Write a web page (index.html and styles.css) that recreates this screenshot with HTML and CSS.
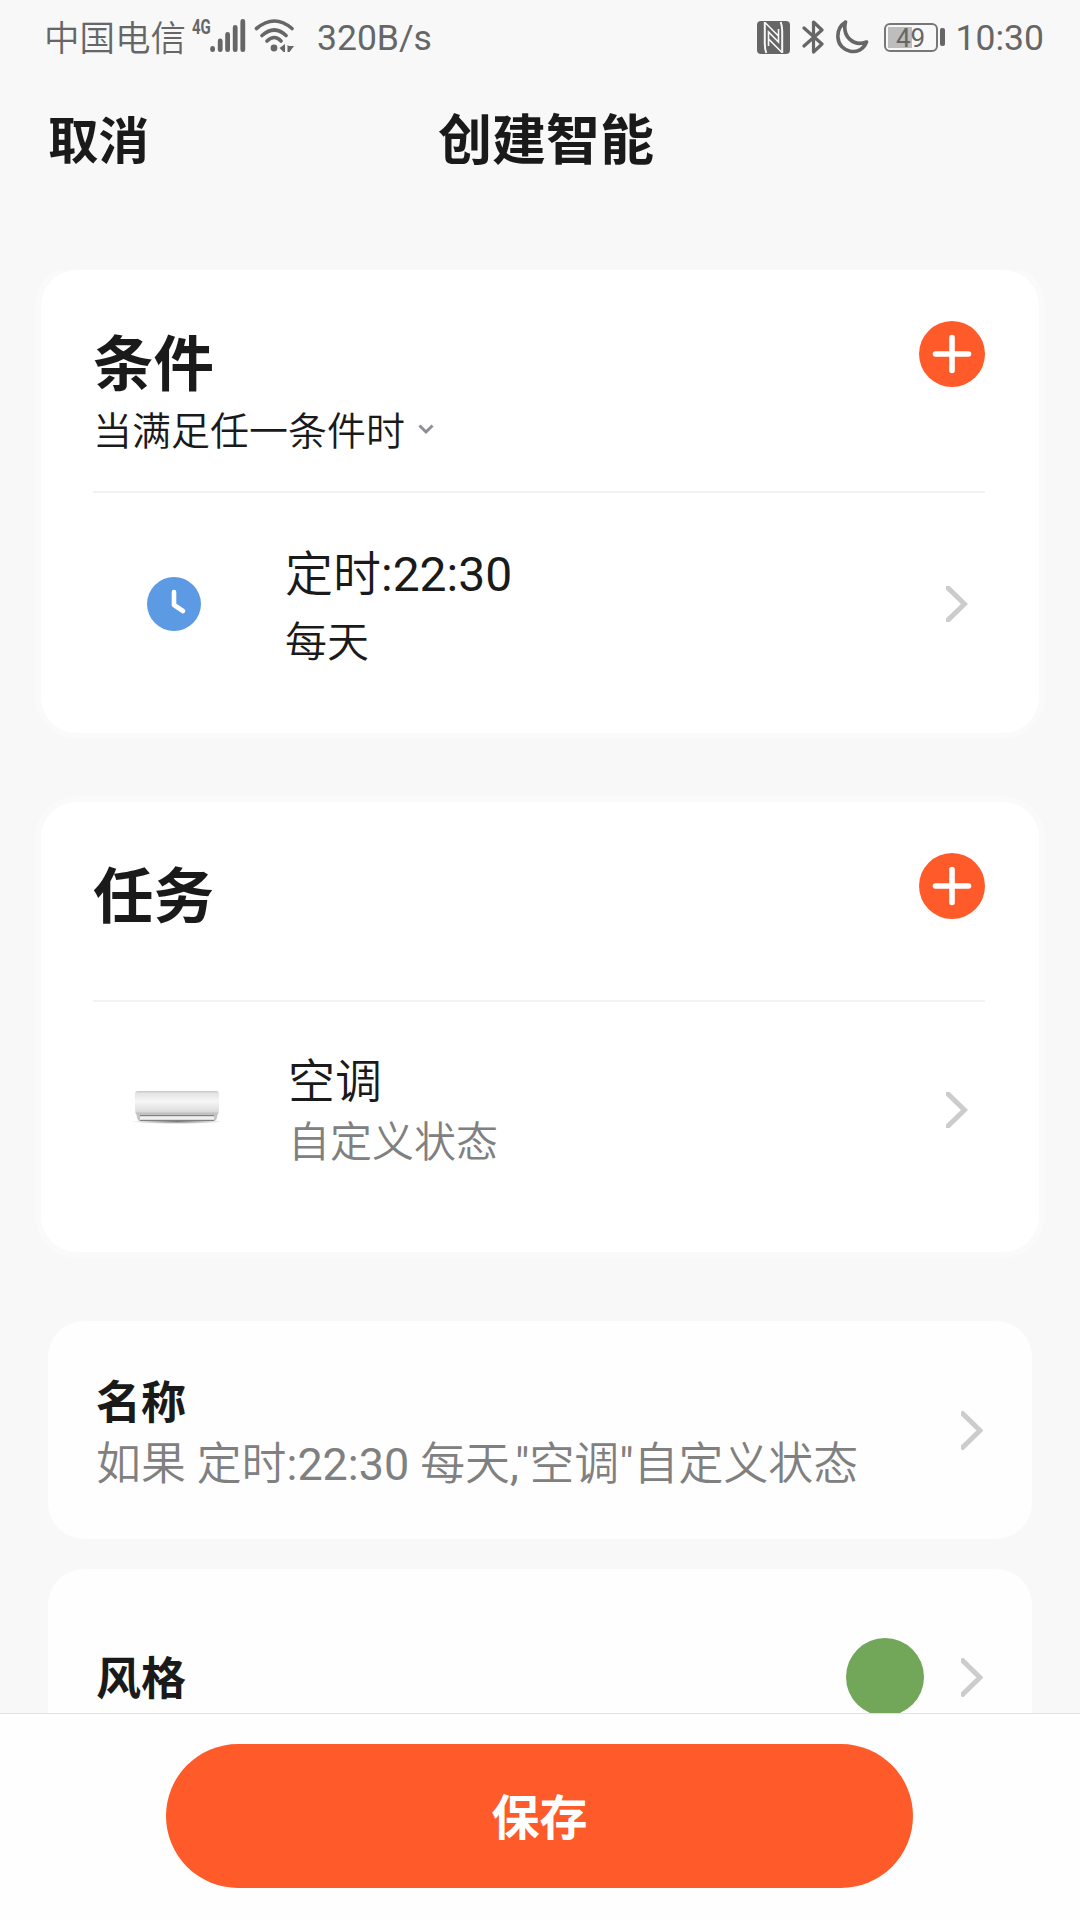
FILE: index.html
```
<!DOCTYPE html>
<html lang="zh-CN">

<head>
  <meta charset="UTF-8">
  <title>创建智能</title>
  <link rel="stylesheet" href="styles.css">
</head>

<body>
  <div class="status-bar">
    <span class="carrier">中国电信</span>
    <span class="network">4G</span>
    <svg class="signal" width="36" height="34" viewBox="0 0 36 34" stroke="#666" stroke-width="4.8" stroke-linecap="round">
      <path d="M2.6 29.5v1.2M10.2 22v8.7M17.6 15.5v15.2M25.2 8.5v22.2M32.8 2.5v28.2" />
    </svg>
    <svg class="wifi" width="42" height="34" viewBox="0 0 42 34" fill="none" stroke="#666" stroke-width="3.6" stroke-linecap="round">
      <path d="M2.5 9.5Q20.5 -5.5 38 9.5M8 16.5Q20.5 5.5 32 16.5M13 22Q20.5 15 27 22" />
      <circle cx="20" cy="29" r="3.4" fill="#666" stroke="none" />
      <path d="M31 25v8h-1.500l-4-4zM33.500 26l1.500 1h5l-4.500 6h-2z" fill="#666" stroke="none" />
    </svg>
    <span class="speed">320B/s</span>
    <div class="status-right">
      <svg class="nfc" width="33" height="33" viewBox="0 0 33 33">
        <rect width="33" height="33" rx="4" fill="#666" />
        <path d="M7.8 1v22q0 5 1.500 9M25.200 32V10q0-5-1.500-9" fill="none" stroke="#f8f8f8" stroke-width="2" />
        <path d="M8 1.500L21.500 15V8M25 31.500L11.500 18v7M11.500 18v-7l10 10v-6" fill="none" stroke="#f8f8f8" stroke-width="1.6" />
      </svg>
      <svg class="bluetooth" width="22" height="34" viewBox="0 0 22 34" fill="none" stroke="#666" stroke-width="3.2" stroke-linejoin="round" stroke-linecap="round">
        <path d="M2 8l18 16-8.5 8V2L20 10 2 26" />
      </svg>
      <svg class="moon" width="34" height="34" viewBox="0 0 34 34" fill="none" stroke="#666" stroke-width="3.6" stroke-linejoin="round">
        <path d="M10.5 2A17 17 0 0 0 3 18C4 32 25 38 31.5 22C18 27 7 16 10.5 2z" />
      </svg>
      <div class="battery"><span>49</span></div>
      <div class="battery-tip"></div>
      <span class="time">10:30</span>
    </div>
  </div>

  <header>
    <a class="cancel">取消</a>
    <h1>创建智能</h1>
  </header>

  <main>
    <section class="card">
      <div class="card-head condition-head">
        <div>
          <h2>条件</h2>
          <p class="match">当满足任一条件时
            <svg width="16" height="11" viewBox="0 0 16 11" fill="none" stroke="#8e8e98" stroke-width="3">
              <path d="M1.5 1.5L8 8l6.5-6.5" />
            </svg>
          </p>
        </div>
        <button class="add">
          <svg width="66" height="66" viewBox="0 0 66 66" stroke="#fff" stroke-width="5.6" stroke-linecap="round">
            <path d="M16.5 33h33M33 16.5v33" />
          </svg>
        </button>
      </div>
      <div class="row condition-row">
        <svg class="clock" width="54" height="54" viewBox="0 0 54 54">
          <circle cx="27" cy="27" r="27" fill="#5c9be3" />
          <path d="M27 15v13l9 6" fill="none" stroke="#fff" stroke-width="4.6" stroke-linecap="round" stroke-linejoin="round" />
        </svg>
        <div class="row-text">
          <p class="name">定时<span class="num">:22:30</span></p>
          <p class="repeat">每天</p>
        </div>
        <svg class="chevron" width="22" height="36" viewBox="0 0 22 36">
          <path d="M0 0l18.5 18L0 36" />
        </svg>
      </div>
    </section>

    <section class="card task-card">
      <div class="card-head task-head">
        <h2>任务</h2>
        <button class="add">
          <svg width="66" height="66" viewBox="0 0 66 66" stroke="#fff" stroke-width="5.6" stroke-linecap="round">
            <path d="M16.5 33h33M33 16.5v33" />
          </svg>
        </button>
      </div>
      <div class="row task-row">
        <svg class="device" width="100" height="36" viewBox="0 0 100 36">
          <defs>
            <linearGradient id="body" x1="0" y1="0" x2="0" y2="1">
              <stop offset="0" stop-color="#c4c4c4" />
              <stop offset=".1" stop-color="#e4e4e4" />
              <stop offset=".45" stop-color="#f6f6f6" />
              <stop offset=".88" stop-color="#dedede" />
              <stop offset="1" stop-color="#b8b8b8" />
            </linearGradient>
            <radialGradient id="shadow">
              <stop offset="0" stop-color="#777" />
              <stop offset="1" stop-color="#777" stop-opacity="0" />
            </radialGradient>
          </defs>
          <ellipse cx="50" cy="31.5" rx="46" ry="2.5" fill="url(#shadow)" />
          <path d="M9 23h82l-1.500 6q-.5 2-2.500 2H13q-2 0-2.500-2z" fill="#c4c4c4" />
          <path d="M11 1h78q3 0 3 3v13q0 6-1 7H9q-1-1-1-7V4q0-3 3-3z" fill="url(#body)" />
          <path d="M13 25.500h74" stroke="#808080" />
          <path d="M13 28h74" stroke="#f0f0f0" stroke-width="3" />
          <path d="M13 30.500h74" stroke="#808080" />
        </svg>
        <div class="row-text">
          <p class="name">空调</p>
          <p class="state">自定义状态</p>
        </div>
        <svg class="chevron" width="22" height="36" viewBox="0 0 22 36">
          <path d="M0 0l18.5 18L0 36" />
        </svg>
      </div>
    </section>

    <section class="item name-item">
      <div>
        <h3>名称</h3>
        <p class="summary">如果 定时<span class="num">:22:30</span> 每天<span class="num">,"</span>空调<span class="num">"</span>自定义状态</p>
      </div>
      <svg class="chevron" width="22" height="39" viewBox="0 0 22 39">
        <path d="M0 1l19 18.5L0 38" />
      </svg>
    </section>

    <section class="item style-item">
      <h3>风格</h3>
      <span class="color-dot"></span>
      <svg class="chevron" width="22" height="39" viewBox="0 0 22 39">
        <path d="M0 1l19 18.5L0 38" />
      </svg>
    </section>
  </main>

  <footer>
    <button class="save">保存</button>
  </footer>
</body>

</html>
```
FILE: styles.css
```
* {
  margin: 0;
  padding: 0;
  box-sizing: border-box;
}
:root {
  --bg-color: #f8f8f8;
  --main-color: #ff5a29;
  --text-color: #1a1a1a;
  --second-text-color: #808080;
  --status-color: #666666;
}
body {
  display: flex;
  flex-direction: column;
  width: 1080px;
  height: 1920px;
  overflow: hidden;
  background-color: var(--bg-color);
  color: var(--text-color);
  font-family: Roboto, "Noto Sans CJK SC", sans-serif;
  font-weight: 350;
}
svg {
  display: block;
  flex-shrink: 0;
}
button {
  border: none;
  font-family: inherit;
}
.num {
  font-weight: 400;
}

/* status bar */
.status-bar {
  display: flex;
  align-items: center;
  height: 72px;
  padding: 2px 36px 0 44px;
  color: var(--status-color);
  font-size: 35.5px;
  line-height: 68px;
  white-space: nowrap;
}
.carrier {
  width: 148px;
  padding-top: 4px;
}
.network {
  width: 18px;
  margin-bottom: 20px;
  font-size: 20px;
  font-weight: 700;
  line-height: 24px;
  transform: scaleX(0.75);
  transform-origin: left;
}
.signal {
  margin-bottom: 2px;
}
.wifi {
  margin: 0 21px 2px 8px;
}
.speed,
.time {
  padding-top: 2px;
  font-weight: 400;
}
.status-right {
  display: flex;
  align-items: center;
  margin-left: auto;
}
.bluetooth {
  margin-left: 12px;
}
.moon {
  margin: 0 15px 0 11px;
}
.battery {
  width: 54px;
  height: 29px;
  padding: 3px;
  border: 2px solid #777;
  border-radius: 6px;
  background: linear-gradient(#bdbdbd, #bdbdbd) 2px 2px / 24px 21px no-repeat;
  font-size: 26px;
  font-weight: 400;
  line-height: 20px;
  text-align: center;
}
.battery-tip {
  width: 5px;
  height: 18px;
  margin: 0 11px 0 2px;
  border-radius: 2px;
  background-color: var(--status-color);
}

/* title */
header {
  display: flex;
  align-items: center;
  height: 198px;
  padding: 0 0 69px 48px;
}
.cancel {
  width: 390px;
  font-size: 50.5px;
  font-weight: 700;
}
h1 {
  font-size: 54px;
  font-weight: 700;
}

/* condition and task cards */
main {
  flex: 1;
  min-height: 0;
  overflow: hidden;
}
.card {
  height: 463px;
  margin: 0 41px;
  padding: 0 54px 0 52px;
  border-radius: 36px;
  background-color: #fff;
  box-shadow: 0 0 0 6px #fafafa;
}
.task-card {
  height: 450px;
  margin-top: 69px;
}
.card-head {
  display: flex;
  justify-content: space-between;
  border-bottom: 2px solid #f2f2f2;
}
.condition-head {
  height: 223px;
  padding-top: 51px;
}
.task-head {
  height: 200px;
  padding-top: 51px;
}
h2 {
  font-size: 60.5px;
  font-weight: 700;
  line-height: 90px;
}
.match {
  display: flex;
  align-items: center;
  gap: 13px;
  font-size: 39px;
  line-height: 42px;
}
.match svg {
  margin-bottom: 6px;
}
.add {
  width: 66px;
  height: 66px;
  border-radius: 50%;
  background-color: var(--main-color);
}
.row {
  display: flex;
}
.row-text {
  flex: 1;
}
.condition-row {
  padding: 48px 17px 0 54px;
}
.condition-row .row-text {
  margin-left: 84px;
}
.clock {
  margin-top: 36px;
}
.condition-row .chevron {
  margin-top: 45px;
}
.name {
  font-size: 48px;
  line-height: 68px;
}
.repeat {
  font-size: 42px;
  line-height: 68px;
}
.task-row {
  padding: 49px 17px 0 34px;
}
.task-row .row-text {
  margin-left: 61px;
}
.device {
  margin-top: 39px;
}
.task-row .name {
  font-size: 47px;
  line-height: 62px;
}
.task-row .chevron {
  margin-top: 41px;
}
.state {
  color: var(--second-text-color);
  font-size: 42px;
  line-height: 60px;
}
.chevron {
  fill: none;
  stroke: #cccccc;
  stroke-width: 5;
}

/* name and style items */
.item {
  display: flex;
  align-items: center;
  margin: 0 48px;
  padding: 0 49px 0 48px;
  border-radius: 36px;
  background-color: #fefefe;
}
.name-item {
  justify-content: space-between;
  height: 218px;
  margin-top: 69px;
}
h3 {
  padding-top: 7px;
  font-size: 45px;
  font-weight: 700;
  line-height: 62px;
}
.summary {
  color: var(--second-text-color);
  font-size: 44.9px;
  line-height: 60px;
}
.style-item {
  height: 216px;
  margin-top: 30px;
}
.style-item h3 {
  padding-top: 5px;
}
.color-dot {
  width: 78px;
  height: 78px;
  margin: 0 37px 0 auto;
  border-radius: 50%;
  background-color: #72a658;
}

/* bottom bar */
footer {
  display: flex;
  height: 207px;
  padding: 30px 166px 0;
  border-top: 1px solid #e2e2e2;
  background-color: #fefefe;
}
.save {
  width: 747px;
  height: 144px;
  padding-bottom: 5px;
  border-radius: 72px;
  background-color: var(--main-color);
  color: #fff;
  font-size: 48px;
  font-weight: 700;
}
```
